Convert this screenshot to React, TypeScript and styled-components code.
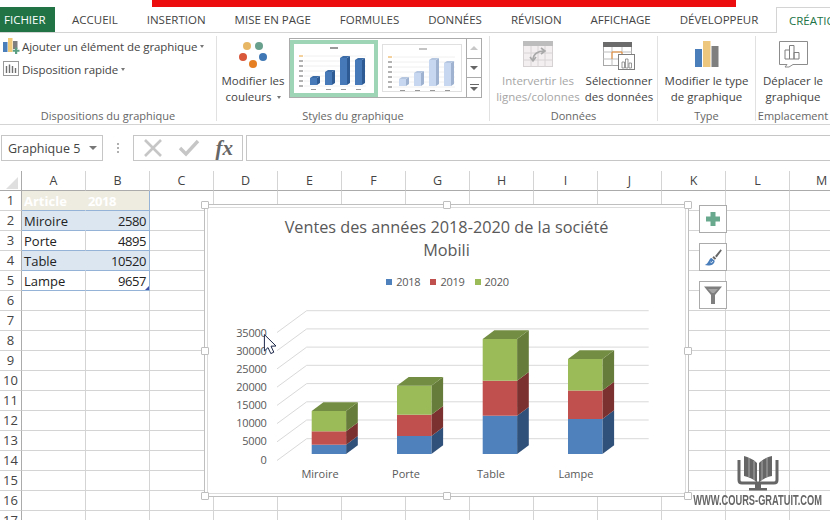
import React from 'react';
import styled, {createGlobalStyle} from "styled-components";

const Global = createGlobalStyle`
  html, body {
    margin: 0;
    padding: 0;
    background: #fff;
    overflow: hidden;
  }
  * { box-sizing: border-box; }
`

const FONT = `"Open Sans", "Noto Sans", "Liberation Sans", sans-serif`

type BarType = { x: number, blue: number, red: number, green: number }

const bars: BarType[] = [
    {x: 311.7, blue: 444.7, red: 431.3, green: 411},
    {x: 397, blue: 436, red: 414.7, green: 385.7},
    {x: 482.7, blue: 415.7, red: 380.7, green: 339},
    {x: 568, blue: 419, red: 390.5, green: 359},
]
const BAR_W = 34.4
const BASE = 454
const DX = 11.7
const DY = -8.7

const axis = [
    {label: '35000', y: 332.7},
    {label: '30000', y: 350.7},
    {label: '25000', y: 368.7},
    {label: '20000', y: 386.7},
    {label: '15000', y: 404.7},
    {label: '10000', y: 422.7},
    {label: '5000', y: 440.7},
    {label: '0', y: 459.5},
]
const backLines = [310.7, 328.9, 347.1, 365.3, 383.6, 401.8, 420, 438.7]
const categories = [{t: 'Miroire', x: 320}, {t: 'Porte', x: 406}, {t: 'Table', x: 491}, {t: 'Lampe', x: 576}]

const tabs = ['ACCUEIL', 'INSERTION', 'MISE EN PAGE', 'FORMULES', 'DONNÉES', 'RÉVISION', 'AFFICHAGE', 'DÉVELOPPEUR']
const columns = ['A', 'B', 'C', 'D', 'E', 'F', 'G', 'H', 'I', 'J', 'K', 'L', 'M']
const rows = [1, 2, 3, 4, 5, 6, 7, 8, 9, 10, 11, 12, 13, 14, 15, 16, 17]

type TableRow = { a: string, b: string, kind: 'head' | 'band' | 'plain' }
const tableRows: TableRow[] = [
    {a: 'Article', b: '2018', kind: 'head'},
    {a: 'Miroire', b: '2580', kind: 'band'},
    {a: 'Porte', b: '4895', kind: 'plain'},
    {a: 'Table', b: '10520', kind: 'band'},
    {a: 'Lampe', b: '9657', kind: 'plain'},
]

const Prism = ({x, top, bottom, front, side}: { x: number, top: number, bottom: number, front: string, side: string }) => {
    const r = x + BAR_W
    return (
        <>
            <polygon points={`${r},${bottom} ${r + DX},${bottom + DY} ${r + DX},${top + DY} ${r},${top}`} fill={side}/>
            <rect x={x} y={top} width={BAR_W} height={bottom - top} fill={front}/>
        </>
    )
}

const ChartDrawing = () => (
    <svg width={478} height={190} viewBox="208 300 478 190" style={{display: 'block'}}>
        {backLines.map((y, i) => (
            <g key={i} stroke="#d9d9d9" strokeWidth={1} fill="none">
                <line x1={306.7} y1={y} x2={648.7} y2={y}/>
                <line x1={306.7} y1={y} x2={277} y2={y + 21.8}/>
            </g>
        ))}
        {axis.map(a => (
            <text key={a.label} x={266.5} y={a.y + 4} textAnchor="end" fontSize={11} letterSpacing={-0.25} fill="#595959" fontFamily={FONT}>{a.label}</text>
        ))}
        {bars.map((b, i) => (
            <g key={i}>
                <Prism x={b.x} top={b.blue} bottom={BASE} front="#4f81bd" side="#30517a"/>
                <Prism x={b.x} top={b.red} bottom={b.blue} front="#c0504d" side="#7b312f"/>
                <Prism x={b.x} top={b.green} bottom={b.red} front="#9bbb59" side="#667c3a"/>
                <polygon
                    points={`${b.x},${b.green} ${b.x + DX},${b.green + DY} ${b.x + BAR_W + DX},${b.green + DY} ${b.x + BAR_W},${b.green}`}
                    fill="#738e42"/>
            </g>
        ))}
        {categories.map(c => (
            <text key={c.t} x={c.x} y={478} textAnchor="middle" fontSize={11} fill="#595959" fontFamily={FONT}>{c.t}</text>
        ))}
        <path d="M264.4 334.6 V351 L268 347.6 L270.8 353.6 L273.8 352.2 L271 346.2 L276 346 Z"
              fill="#fff" stroke="#1c2748" strokeWidth={1}/>
    </svg>
)

const GalleryThumb = ({pale}: { pale?: boolean }) => {
    const xs = [16, 31, 46, 61]
    const tops = pale ? [34, 28, 15, 18] : [34, 28, 14, 16]
    return (
        <svg width={78} height={48} viewBox="0 0 78 48" style={{display: 'block'}}>
            <rect x={36} y={3} width={8} height={2} fill={pale ? '#c4c4c4' : '#999'}/>
            {[12, 17, 22, 27, 32, 37, 42].map(y => (
                <g key={y}>
                    <line x1={10} y1={y} x2={72} y2={y} stroke="#f0f0f0"/>
                    <line x1={5} y1={y} x2={9} y2={y} stroke={y === 12 ? '#e8a33d' : '#666'}/>
                </g>
            ))}
            {xs.map((x, i) => (
                <g key={x}>
                    <polygon points={`${x + 7},41 ${x + 10},39 ${x + 10},${tops[i] - 2} ${x + 7},${tops[i]}`}
                             fill={pale ? '#9fb3d1' : '#2f5b94'}/>
                    <polygon points={`${x},${tops[i]} ${x + 3},${tops[i] - 2} ${x + 10},${tops[i] - 2} ${x + 7},${tops[i]}`}
                             fill={pale ? '#b5c7e0' : '#3b6ca8'}/>
                    <rect x={x} y={tops[i]} width={7} height={41 - tops[i]} fill={pale ? '#c6d7ef' : '#4679b8'}/>
                    <rect x={x + 1} y={45} width={5} height={1} fill="#999"/>
                </g>
            ))}
        </svg>
    )
}

export default function App() {
    return (
        <Page>
            <Global/>
            <TopStrip><RedBar/></TopStrip>
            <TabBar>
                <FileTab>FICHIER</FileTab>
                <Tabs>
                    {tabs.map(t => <Tab key={t}>{t}</Tab>)}
                </Tabs>
                <ActiveTab>CRÉATION</ActiveTab>
            </TabBar>

            <Ribbon>
                <Group $width={217}>
                    <GroupBody>
                        <SmallButtons>
                            <SmallButton>
                                <svg width={17} height={16} viewBox="0 0 17 16">
                                    <rect x={0} y={4} width={4.5} height={10} fill="#4a7ebb"/>
                                    <rect x={5} y={0} width={4.5} height={14} fill="#f0c979"/>
                                    <rect x={10} y={3} width={4.5} height={8} fill="#7f7f7f"/>
                                    <path d="M12 9.5h2.2v2.2h2.3v2.1h-2.3v2.2H12v-2.2H9.8v-2.1H12z" fill="#5b9f82"/>
                                </svg>
                                Ajouter un élément de graphique<SmallCaret/>
                            </SmallButton>
                            <SmallButton>
                                <svg width={17} height={16} viewBox="0 0 17 16">
                                    <rect x={0.5} y={0.5} width={15} height={14} fill="#fff" stroke="#9a9a9a"/>
                                    <path d="M3.5 12V5M6.5 12V3.5M9.5 12V5M12.5 12V7" stroke="#6f6f6f" strokeWidth={1.4}/>
                                </svg>
                                Disposition rapide<SmallCaret/>
                            </SmallButton>
                        </SmallButtons>
                    </GroupBody>
                    <GroupLabel>Dispositions du graphique</GroupLabel>
                </Group>

                <Group $width={273}>
                    <GroupBody>
                        <BigButton $width={72}>
                            <IconSlot>
                                <svg width={30} height={30} viewBox="0 0 30 30">
                                    <circle cx={9} cy={5} r={4} fill="#e8b765"/>
                                    <circle cx={21} cy={5} r={4} fill="#69a08d"/>
                                    <circle cx={5} cy={16} r={4} fill="#d9573a"/>
                                    <circle cx={25} cy={16} r={4} fill="#3f78b5"/>
                                    <circle cx={15} cy={23} r={4} fill="#e67e22"/>
                                </svg>
                            </IconSlot>
                            <ButtonText>Modifier les<br/>couleurs<Caret/></ButtonText>
                        </BigButton>
                        <Gallery>
                            <SelectedStyle><GalleryThumb/></SelectedStyle>
                            <PlainStyle><GalleryThumb pale/></PlainStyle>
                            <GalleryScroll>
                                <ScrollButton><ArrowUp/></ScrollButton>
                                <ScrollButton><ArrowDown/></ScrollButton>
                                <ScrollButton><MoreLine/><ArrowDown/></ScrollButton>
                            </GalleryScroll>
                        </Gallery>
                    </GroupBody>
                    <GroupLabel>Styles du graphique</GroupLabel>
                </Group>

                <Group $width={168}>
                    <GroupBody>
                        <BigButton $width={96} $muted>
                            <IconSlot>
                                <svg width={30} height={28} viewBox="0 0 30 28">
                                    <rect x={0.5} y={0.5} width={29} height={25} fill="#f3eff1" stroke="#d6d2d4"/>
                                    <rect x={0} y={0} width={30} height={5} fill="#bdbdbd"/>
                                    <path d="M0 12H30M0 19H30M8 5V26M15 5V26M22 5V26" stroke="#d8d4d6"/>
                                    <path d="M10 19C10 13 15 10 21 10M18 7l4 3-4 3M7 16l3 4 3-4"
                                          stroke="#a9a9a9" strokeWidth={1.6} fill="none"/>
                                </svg>
                            </IconSlot>
                            <ButtonText>Intervertir les<br/>lignes/colonnes</ButtonText>
                        </BigButton>
                        <BigButton $width={66}>
                            <IconSlot>
                                <svg width={32} height={30} viewBox="0 0 32 30">
                                    <rect x={0.5} y={1.5} width={28} height={23} fill="#fff" stroke="#a8a8a8"/>
                                    <rect x={0} y={1} width={29} height={5} fill="#6b6b6b"/>
                                    <path d="M0 11H29M0 18H29M9 6V25M19 6V25" stroke="#bdbdbd"/>
                                    <path d="M9 18V11H19V18" stroke="#ed8b2f" fill="none"/>
                                    <rect x={15.5} y={13.5} width={16} height={15} fill="#fff" stroke="#7f7f7f"/>
                                    <path d="M19 27V21h2.5v6zM22.5 27V18h2.5v9zM26 27v-5h2.5v5z" fill="#fff" stroke="#7f7f7f" strokeWidth={0.8}/>
                                </svg>
                            </IconSlot>
                            <ButtonText>Sélectionner<br/>des données</ButtonText>
                        </BigButton>
                    </GroupBody>
                    <GroupLabel>Données</GroupLabel>
                </Group>

                <Group $width={98}>
                    <GroupBody>
                        <BigButton $width={97}>
                            <IconSlot>
                                <svg width={24} height={27} viewBox="0 0 24 27">
                                    <rect x={0} y={8} width={7} height={18} fill="#4a7ebb"/>
                                    <rect x={8} y={0} width={7.5} height={26} fill="#eec77f"/>
                                    <rect x={16.5} y={5} width={7} height={21} fill="#7f7f7f"/>
                                </svg>
                            </IconSlot>
                            <ButtonText>Modifier le type<br/>de graphique</ButtonText>
                        </BigButton>
                    </GroupBody>
                    <GroupLabel>Type</GroupLabel>
                </Group>

                <Group $width={74} $last>
                    <GroupBody>
                        <BigButton $width={74}>
                            <IconSlot>
                                <svg width={29} height={28} viewBox="0 0 29 28">
                                    <path d="M0.5 0.5H28.5V23.5H14L10 26H6L8 23.5H0.5Z" fill="#fff" stroke="#8c8c8c"/>
                                    <path d="M6 18V9h4.5v9zM10.5 18V4.5H15V18zM15 18v-6.5h5V18z" fill="#fff" stroke="#7f7f7f"/>
                                </svg>
                            </IconSlot>
                            <ButtonText>Déplacer le<br/>graphique</ButtonText>
                        </BigButton>
                    </GroupBody>
                    <GroupLabel>Emplacement</GroupLabel>
                </Group>
            </Ribbon>

            <FormulaBar>
                <NameBox>Graphique 5<NameCaret/></NameBox>
                <Dots><i/><i/><i/></Dots>
                <FormulaTools>
                    <svg width={20} height={18} viewBox="0 0 20 18">
                        <path d="M2 1L18 17M18 1L2 17" stroke="#c6c6c6" strokeWidth={2.6}/>
                    </svg>
                    <svg width={22} height={18} viewBox="0 0 22 18">
                        <path d="M2 9L8 15L20 2" stroke="#c6c6c6" strokeWidth={3.4} fill="none"/>
                    </svg>
                    <FxLabel>fx</FxLabel>
                </FormulaTools>
                <FormulaInput/>
            </FormulaBar>

            <Sheet>
                <SheetGrid>
                    <CornerCell><CornerMark/></CornerCell>
                    {columns.map(c => <ColHead key={c}>{c}</ColHead>)}
                    {rows.map(r => {
                        const data = tableRows[r - 1]
                        return (
                            <React.Fragment key={r}>
                                <RowHead>{r}</RowHead>
                                {columns.map((c, i) => {
                                    if (data && i === 0) {
                                        return <Cell key={c} $kind={data.kind}>{data.a}</Cell>
                                    }
                                    if (data && i === 1) {
                                        return <Cell key={c} $kind={data.kind} $second $head={data.kind === 'head'}>
                                            {data.b}
                                            {r === 5 && <ResizeMark/>}
                                        </Cell>
                                    }
                                    return <Cell key={c}/>
                                })}
                            </React.Fragment>
                        )
                    })}
                </SheetGrid>

                <ChartFrame>
                    <ChartInner>
                        <ChartTitle>Ventes des années 2018-2020 de la société<br/>Mobili</ChartTitle>
                        <Legend>
                            <LegendItem $color="#4f81bd">2018</LegendItem>
                            <LegendItem $color="#c0504d">2019</LegendItem>
                            <LegendItem $color="#9bbb59">2020</LegendItem>
                        </Legend>
                        <ChartDrawing/>
                    </ChartInner>
                    <Handle $x="0%" $y="0%"/>
                    <Handle $x="50%" $y="0%"/>
                    <Handle $x="100%" $y="0%"/>
                    <Handle $x="0%" $y="50%"/>
                    <Handle $x="100%" $y="50%"/>
                    <Handle $x="0%" $y="100%"/>
                    <Handle $x="50%" $y="100%"/>
                    <Handle $x="100%" $y="100%"/>
                </ChartFrame>

                <ChartTools>
                    <ToolButton>
                        <svg width={16} height={16} viewBox="0 0 16 16">
                            <path d="M5.5 1h5v4.5h4.5v5h-4.5v4.5h-5v-4.5H1v-5h4.5z" fill="#69a98d"/>
                        </svg>
                    </ToolButton>
                    <ToolButton>
                        <svg width={19} height={19} viewBox="0 0 24 24">
                            <path d="M14 10L21 1.5L22.5 3L16 12Z" fill="#666"/>
                            <path d="M11.5 11L14.5 14" stroke="#666" strokeWidth={2.5}/>
                            <path d="M9.5 12.5C6 13 6.5 19 1 21.5C7 23 13 21.5 13.5 16Z" fill="#4a7ebb"/>
                            <path d="M8 17.5C9 19 11 18.5 11 16.5" stroke="#fff" strokeWidth={1} fill="none"/>
                        </svg>
                    </ToolButton>
                    <ToolButton>
                        <svg width={22} height={22} viewBox="0 0 22 22">
                            <path d="M2 2.5H20L13 11V20H9V11Z" fill="#7f7f7f"/>
                            <path d="M6 5H16L12 9H10Z" fill="#a6a6a6"/>
                        </svg>
                    </ToolButton>
                </ChartTools>

                <Watermark>
                    <svg width={44} height={36} viewBox="0 0 44 36">
                        <path d="M3 5V25Q3 28 6 28H38Q41 28 41 25V5" stroke="#666" strokeWidth={3} fill="none"/>
                        <path d="M21 8C17 4 12 2 8 1V21C13 22 18 24 21 28Z" fill="#666"/>
                        <path d="M23 8C27 4 32 2 36 1V21C31 22 26 24 23 28Z" fill="#666"/>
                        <path d="M13 3V22M18 6V25M26 6V25M31 3V22" stroke="#bbb" strokeWidth={0.8}/>
                        <rect x={19} y={28} width={6} height={5} fill="#666"/>
                        <rect x={13} y={33} width={18} height={2.5} fill="#666"/>
                    </svg>
                    <WatermarkText>WWW.COURS-GRATUIT.COM</WatermarkText>
                </Watermark>
            </Sheet>
        </Page>
    );
};

const Page = styled.div`
  position: relative;
  width: 830px;
  height: 520px;
  overflow: hidden;
  background: #fff;
  font-family: ${FONT};
  color: #444;
`

const TopStrip = styled.div`
  height: 7px;
  padding-left: 152px;
`

const RedBar = styled.div`
  width: 584px;
  height: 7px;
  background: #ec0e0e;
`

const TabBar = styled.div`
  display: flex;
  height: 26px;
  border-bottom: 1px solid #d4d4d4;
`

const FileTab = styled.div`
  flex: none;
  width: 55px;
  height: 25px;
  line-height: 25px;
  padding-left: 4px;
  background: #217346;
  color: #fff;
  font-size: 11.5px;
`

const Tabs = styled.div`
  display: flex;
  flex: none;
  padding-left: 2.5px;
  width: 721px;
`

const Tab = styled.div`
  padding: 0 14.5px;
  line-height: 25px;
  font-size: 11.5px;
  color: #444;
  white-space: nowrap;
`

const ActiveTab = styled(Tab)`
  flex: none;
  height: 26px;
  padding-left: 12px;
  background: #fff;
  border: 1px solid #d4d4d4;
  border-bottom: none;
  border-right: none;
  color: #217346;
`

const Ribbon = styled.div`
  display: flex;
  height: 92px;
  padding-top: 3px;
  border-bottom: 1px solid #d4d4d4;
  overflow: hidden;
`

const Group = styled.div<{ $width: number, $last?: boolean }>`
  display: flex;
  flex-direction: column;
  flex: none;
  width: ${props => props.$width}px;
  height: 85px;
  border-right: ${props => props.$last ? 'none' : '1px solid #e1e1e1'};
`

const GroupBody = styled.div`
  display: flex;
  flex: 1;
  min-height: 0;
`

const GroupLabel = styled.div`
  height: 10px;
  line-height: 10px;
  text-align: center;
  font-size: 11px;
  color: #666;
  white-space: nowrap;
`

const SmallButtons = styled.div`
  display: flex;
  flex-direction: column;
  gap: 7px;
  padding: 2px 0 0 3px;
`

const SmallButton = styled.div`
  display: flex;
  align-items: center;
  gap: 2px;
  height: 16px;
  font-size: 11.5px;
  letter-spacing: -0.08px;
  white-space: nowrap;
`

const Caret = styled.span`
  display: inline-block;
  width: 0;
  height: 0;
  margin-left: 5px;
  vertical-align: middle;
  border-left: 2.5px solid transparent;
  border-right: 2.5px solid transparent;
  border-top: 3px solid #777;
`

const SmallCaret = styled(Caret)`
  margin-left: 1px;
`

const BigButton = styled.div<{ $width: number, $muted?: boolean }>`
  display: flex;
  flex-direction: column;
  align-items: center;
  flex: none;
  width: ${props => props.$width}px;
  color: ${props => props.$muted ? '#a6a6a6' : '#444'};
`

const IconSlot = styled.div`
  display: flex;
  align-items: flex-start;
  justify-content: center;
  height: 37px;
  padding-top: 5px;
`

const ButtonText = styled.div`
  font-size: 11.5px;
  line-height: 16px;
  text-align: center;
  white-space: nowrap;
`

const Gallery = styled.div`
  display: flex;
  align-items: stretch;
  flex: none;
  width: 193px;
  height: 60px;
  margin-top: 2px;
  border: 1px solid #ababab;
`

const SelectedStyle = styled.div`
  width: 88px;
  padding: 0;
  margin-top: 1px;
  height: 57px;
  border: 4px solid #9fd5b7;
  overflow: hidden;
`

const PlainStyle = styled.div`
  width: 80px;
  height: 48px;
  margin: 5px 0 0 4px;
  border: 1px solid #e0e0e0;
  overflow: hidden;
`

const GalleryScroll = styled.div`
  display: flex;
  flex-direction: column;
  flex: none;
  width: 15px;
  margin-left: auto;
  border-left: 1px solid #ababab;
`

const ScrollButton = styled.div`
  display: flex;
  flex-direction: column;
  align-items: center;
  justify-content: center;
  flex: 1;
  gap: 2px;
  border-bottom: 1px solid #ababab;
  &:last-child { border-bottom: none; }
`

const ArrowUp = styled.span`
  width: 0;
  height: 0;
  border-left: 4px solid transparent;
  border-right: 4px solid transparent;
  border-bottom: 4px solid #c8c8c8;
`

const ArrowDown = styled.span`
  width: 0;
  height: 0;
  border-left: 4px solid transparent;
  border-right: 4px solid transparent;
  border-top: 4px solid #666;
`

const MoreLine = styled.span`
  width: 9px;
  height: 1px;
  background: #666;
`

const FormulaBar = styled.div`
  display: flex;
  align-items: stretch;
  height: 26px;
  margin: 10px 0 10px 1px;
`

const NameBox = styled.div`
  position: relative;
  display: flex;
  align-items: center;
  width: 102px;
  padding-left: 6px;
  border: 1px solid #c6c6c6;
  font-size: 12.5px;
  color: #444;
`

const NameCaret = styled.span`
  position: absolute;
  right: 5px;
  top: 10px;
  border-left: 4px solid transparent;
  border-right: 4px solid transparent;
  border-top: 4px solid #777;
`

const Dots = styled.div`
  display: flex;
  flex-direction: column;
  align-items: center;
  justify-content: center;
  gap: 2px;
  width: 30px;
  & > i {
    width: 2px;
    height: 2px;
    background: #b0b0b0;
  }
`

const FormulaTools = styled.div`
  display: flex;
  align-items: center;
  justify-content: space-between;
  width: 110px;
  padding: 0 9px;
  border: 1px solid #c6c6c6;
`

const FxLabel = styled.span`
  font-family: "Liberation Serif", serif;
  font-style: italic;
  font-weight: bold;
  font-size: 21px;
  line-height: 1;
  color: #666;
`

const FormulaInput = styled.div`
  flex: 1;
  margin-left: 3px;
  border: 1px solid #c6c6c6;
  border-right: none;
`

const Sheet = styled.div`
  position: relative;
`

const SheetGrid = styled.div`
  display: grid;
  grid-template-columns: 22px repeat(13, 64px);
  grid-auto-rows: 20px;
`

const CornerCell = styled.div`
  position: relative;
  border-right: 1px solid #ababab;
  border-bottom: 1px solid #ababab;
`

const CornerMark = styled.div`
  position: absolute;
  right: 3px;
  bottom: 1px;
  border-left: 12px solid transparent;
  border-bottom: 12px solid #dfdfdf;
`

const ColHead = styled.div`
  text-align: center;
  line-height: 19px;
  font-size: 12.5px;
  color: #444;
  border-right: 1px solid #d4d4d4;
  border-bottom: 1px solid #ababab;
`

const RowHead = styled.div`
  text-align: center;
  line-height: 19px;
  font-size: 13px;
  color: #444;
  border-right: 1px solid #ababab;
  border-bottom: 1px solid #d4d4d4;
`

const Cell = styled.div<{ $kind?: 'head' | 'band' | 'plain', $second?: boolean, $head?: boolean }>`
  position: relative;
  padding: 0 3px 0 2px;
  line-height: 20px;
  font-size: 13px;
  color: #222;
  white-space: nowrap;
  text-align: ${props => props.$second && !props.$head ? 'right' : 'left'};
  letter-spacing: ${props => props.$second ? '-0.45px' : '0'};
  border-right: 1px solid ${props => {
    if (props.$second) return '#95b3d7'
    if (props.$kind === 'head') return '#eeece1'
    if (props.$kind === 'band') return '#dce6f1'
    return '#d4d4d4'
  }};
  border-bottom: 1px solid ${props => props.$kind ? '#95b3d7' : '#d4d4d4'};
  background: ${props => {
    if (props.$kind === 'head') return '#eeece1'
    if (props.$kind === 'band') return '#dce6f1'
    return '#fff'
  }};
  ${props => props.$kind === 'head' && 'color: #fff; font-weight: bold;'}
`

const ResizeMark = styled.span`
  position: absolute;
  right: 0;
  bottom: 0;
  border-left: 4px solid transparent;
  border-bottom: 4px solid #3f51a8;
`

const ChartFrame = styled.div`
  position: absolute;
  left: 204px;
  top: 33px;
  width: 485px;
  height: 293px;
  border: 1px solid #bfbfbf;
  padding: 2px;
  background: #fff;
`

const ChartInner = styled.div`
  height: 100%;
  border: 1px solid #dcdcdc;
  padding-top: 8px;
  overflow: hidden;
`

const ChartTitle = styled.div`
  text-align: center;
  font-size: 16.25px;
  line-height: 23px;
  color: #595959;
`

const Legend = styled.div`
  display: flex;
  justify-content: center;
  gap: 10px;
  height: 14px;
  margin: 13px 0 11px;
  padding-left: 2px;
`

const LegendItem = styled.div<{ $color: string }>`
  display: flex;
  align-items: center;
  gap: 4px;
  font-size: 11px;
  letter-spacing: -0.25px;
  line-height: 14px;
  color: #595959;
  &::before {
    content: "";
    width: 6px;
    height: 6px;
    background: ${props => props.$color};
  }
`

const Handle = styled.span<{ $x: string, $y: string }>`
  position: absolute;
  left: ${props => props.$x};
  top: ${props => props.$y};
  width: 8px;
  height: 8px;
  transform: translate(-50%, -50%);
  background: #fff;
  border: 1px solid #bfbfbf;
  border-radius: 1px;
`

const ChartTools = styled.div`
  position: absolute;
  left: 699px;
  top: 34px;
  display: flex;
  flex-direction: column;
  gap: 10px;
`

const ToolButton = styled.div`
  display: flex;
  align-items: center;
  justify-content: center;
  width: 28px;
  height: 28px;
  background: #fff;
  border: 1px solid #ababab;
`

const Watermark = styled.div`
  position: absolute;
  left: 679px;
  top: 284px;
  width: 157px;
  display: flex;
  flex-direction: column;
  align-items: center;
  filter: blur(0.5px);
`

const WatermarkText = styled.div`
  margin-top: 2px;
  font-family: "Liberation Sans", sans-serif;
  font-weight: bold;
  font-size: 14.5px;
  line-height: 14px;
  color: #666;
  white-space: nowrap;
  transform: scaleX(0.64);
`
